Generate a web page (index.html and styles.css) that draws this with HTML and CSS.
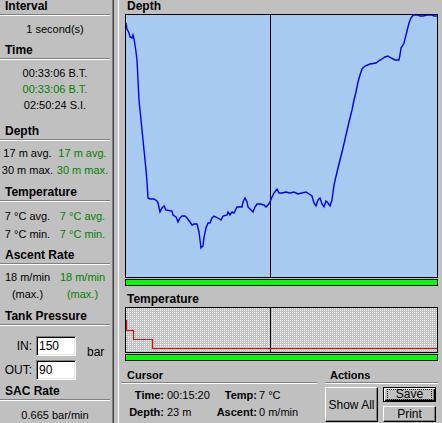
FILE: index.html
```html
<!DOCTYPE html>
<html>
<head>
<meta charset="utf-8">
<link rel="stylesheet" href="styles.css">
</head>
<body>
<div class="app">
  <aside class="side">
    <section class="sec">
      <h2 class="sec-h">Interval</h2>
      <div class="sec-b b-interval"><div class="row16 center">1 second(s)</div></div>
    </section>
    <section class="sec">
      <h2 class="sec-h">Time</h2>
      <div class="sec-b b-time">
        <div class="row16 center">00:33:06 B.T.</div>
        <div class="row16 center green">00:33:06 B.T.</div>
        <div class="row16 center">02:50:24 S.I.</div>
      </div>
    </section>
    <section class="sec">
      <h2 class="sec-h">Depth</h2>
      <div class="sec-b b-depth pair r17">
        <div>17 m avg.</div><div class="green">17 m avg.</div>
        <div>30 m max.</div><div class="green">30 m max.</div>
      </div>
    </section>
    <section class="sec">
      <h2 class="sec-h">Temperature</h2>
      <div class="sec-b b-temp pair r18">
        <div>7 °C avg.</div><div class="green">7 °C avg.</div>
        <div>7 °C min.</div><div class="green">7 °C min.</div>
      </div>
    </section>
    <section class="sec">
      <h2 class="sec-h">Ascent Rate</h2>
      <div class="sec-b b-ascent pair r17">
        <div>18 m/min</div><div class="green">18 m/min</div>
        <div>(max.)</div><div class="green">(max.)</div>
      </div>
    </section>
    <section class="sec">
      <h2 class="sec-h">Tank Pressure</h2>
      <div class="sec-b b-tank">
        <div class="lbl">IN:</div><div class="field">150</div>
        <div class="lbl">OUT:</div><div class="field">90</div>
        <div class="unit">bar</div>
      </div>
    </section>
    <section class="sec">
      <h2 class="sec-h">SAC Rate</h2>
      <div class="sec-b b-sac"><div class="row16 center">0.665 bar/min</div></div>
    </section>
  </aside>
  <div class="divider"></div>
  <main class="main">
    <h2 class="m-head">Depth</h2>
    <div class="chart depth">
      <svg width="311" height="262" viewBox="126 15 311 262">
        <line x1="270.5" y1="0" x2="270.5" y2="300" stroke="#000" stroke-width="1"/>
        <polyline fill="none" stroke="#0000ff" stroke-width="1.4" stroke-linejoin="miter"
          points="126,23 127,29 129,33 130,37 132,38 133,35 134,39 135,45 136,52 137,60 138,80 139,100 140,110 142,130 144,150 146,170 147,182 148,198 150,199 154,199 157,201 158,203 160,212 162,208 164,206 166,210 172,211 173,215 176,217 178,222 180,218 182,216 185,216 187,218 190,222 192,225 194,224 197,224 199,232 200,240 201,248 203,246 204,237 206,228 208,223 210,223 212,218 214,216 218,218 221,220 223,216 227,215 228,212 230,215 232,212 234,213 237,207 242,207 243,202 245,198 247,202 248,207 252,211 253,212 255,207 257,204 260,204 264,205 266,207 268,205 270,202 272,197 274,193 277,189 279,193 282,193 286,192 290,193 294,192 298,194 302,193 306,192 309,194 312,196 314,203 316,206 318,200 320,198 322,204 324,207 326,201 328,203 330,206 332,200 334,185 337,172 340,160 343,148 346,135 349,122 352,110 354,100 356,92 358,82 360,75 362,69 365,66 370,64 376,63 380,60 382,59 385,57 388,56 391,58 395,60 399,60 400,55 401,48 403,45 404,43 406,35 407,31 409,23 411,18 413,15 418,15 420,16 423,16 427,15 432,15 434,16 437,16"/>
      </svg>
    </div>
    <div class="gbar"></div>
    <h2 class="m-head m-head2">Temperature</h2>
    <div class="chart temp">
      <svg width="311" height="44" viewBox="126 308 311 44">
        <line x1="270.5" y1="300" x2="270.5" y2="360" stroke="#000" stroke-width="1"/>
        <polyline fill="none" stroke="#ff0000" stroke-width="1.2"
          points="126.5,320 126.5,330.5 133.5,330.5 133.5,339.5 152.5,339.5 152.5,348.5 437,348.5"/>
      </svg>
    </div>
    <div class="gbar"></div>
    <div class="bottom">
      <section class="grp cursor">
        <h3 class="g-h">Cursor</h3>
        <div class="cgrid">
          <b class="cl">Time:</b><span class="cv">00:15:20</span><b class="cl">Temp:</b><span class="cv2">7 °C</span>
          <b class="cl">Depth:</b><span class="cv">23 m</span><b class="cl">Ascent:</b><span class="cv2">0 m/min</span>
        </div>
      </section>
      <section class="grp actions">
        <h3 class="g-h">Actions</h3>
        <div class="abody">
          <div class="btn showall">Show All</div>
          <div class="bcol">
            <div class="btn save"><span class="focus">Save</span></div>
            <div class="btn print">Print</div>
          </div>
        </div>
      </section>
    </div>
  </main>
</div>
</body>
</html>
```
FILE: styles.css
```css
* { box-sizing: border-box; margin: 0; padding: 0; }
html, body { width: 442px; height: 423px; overflow: hidden; }
body {
  background: #c0c0c0;
  font-family: "Liberation Sans", Arial, sans-serif;
  font-size: 11px;
  color: #000;
}
.app { display: flex; height: 423px; }

.side { width: 112px; padding-right: 2px; display: flex; flex-direction: column; }
.sec-h {
  font-size: 12px; font-weight: bold;
  height: 15px; line-height: 13px;
  padding-left: 5px;
  border-bottom: 1px solid #808080;
  box-shadow: 0 1px 0 #fff;
}
.center { text-align: center; }
.green { color: #008000; }
.row16 { line-height: 16px; }
.b-interval { padding: 6px 0 7px; }
.b-time { padding: 6px 0 12px; }
.pair { display: grid; grid-template-columns: 55px 55px; text-align: center; }
.r17 { grid-auto-rows: 17px; line-height: 17px; }
.r18 { grid-auto-rows: 18px; line-height: 18px; }
.b-depth { padding: 5px 0 7px; }
.b-temp { padding: 6px 0 6px; }
.b-ascent { padding: 5px 0 7px; }
.b-tank {
  padding: 11px 0 5px;
  display: grid;
  grid-template-columns: 32px 40px auto;
  grid-template-rows: 20px 20px;
  column-gap: 4px; row-gap: 4px;
}
.lbl { text-align: right; line-height: 20px; font-size: 12px; }
.field {
  background: #fff;
  border: 1px solid; border-color: #808080 #fff #fff #808080;
  box-shadow: inset 1px 1px 0 #000, inset -1px -1px 0 #dfe8df;
  line-height: 18px; padding-left: 2px; font-size: 12px;
}
.unit { grid-column: 3; grid-row: 1 / 3; align-self: center; padding-left: 7px; margin-bottom: 12px; font-size: 12px; }
.b-sac { padding-top: 7px; }

.divider {
  width: 7px;
  border-left: 1px solid #808080;
  box-shadow: inset 1px 0 0 #404040, inset -1px 0 0 #fff;
}

.main { width: 323px; padding: 0 4px 0 2px; display: flex; flex-direction: column; }
.m-head {
  font-size: 12px; font-weight: bold;
  height: 14px; line-height: 12px;
  padding-left: 6px;
}
.m-head2 { height: 21px; padding-top: 6px; line-height: 14px; }
.chart { margin-left: 4px; width: 313px; border: 1px solid #000; }
.chart svg { display: block; }
.depth { height: 264px; background: #a6caf0; }
.temp {
  height: 46px;
  background-color: #fff;
  background-image:
    linear-gradient(90deg, transparent 1px, #c0c0c0 1px),
    linear-gradient(transparent 1px, #c0c0c0 1px);
  background-size: 2px 2px;
}
.gbar { margin: 1px 0 0 4px; width: 313px; height: 7px; border: 1px solid #000; background: #00ff00; }

.bottom { display: flex; gap: 8px; }
.grp { display: flex; flex-direction: column; }
.cursor { width: 196px; }
.actions { width: 113px; }
.g-h {
  font-size: 11px; font-weight: bold;
  height: 22px; padding-top: 7px; line-height: 14px;
  padding-left: 6px;
  border-bottom: 1px solid #808080;
  box-shadow: 0 1px 0 #fff;
}
.actions .g-h { padding-left: 5px; }
.cgrid {
  margin-top: 4px;
  display: grid;
  grid-template-columns: 43px 51px 42px auto;
  grid-auto-rows: 17px; line-height: 17px;
}
.cl { text-align: right; }
.cv { padding-left: 3px; }
.cv2 { padding-left: 2px; }

.abody { margin-top: 4px; display: flex; gap: 5px; }
.btn {
  background: #c0c0c0;
  border: 1px solid; border-color: #fff #000 #000 #fff;
  box-shadow: inset -1px -1px 0 #808080;
  display: flex; align-items: center; justify-content: center;
  font-size: 12px;
}
.showall { width: 53px; height: 35px; }
.bcol { width: 53px; display: flex; flex-direction: column; gap: 4px; }
.save {
  height: 15px;
  border: 1px solid #000;
  box-shadow: inset 1px 1px 0 #fff, inset -1px -1px 0 #000, inset -2px -2px 0 #808080;
}
.focus {
  display: block; width: 45px; height: 11px;
  border: 1px dotted #000;
  line-height: 9px; text-align: center;
}
.print { height: 16px; }
```
